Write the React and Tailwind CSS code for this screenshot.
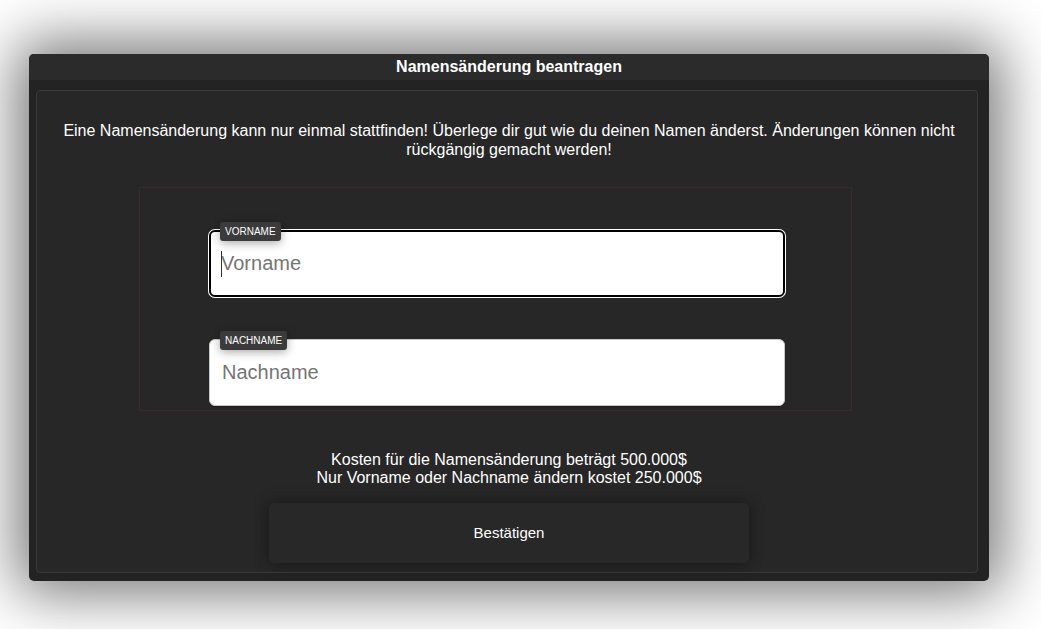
import { useState } from 'react';

const FloatingInput = ({ label, placeholder, focused }) => {
  const [value, setValue] = useState('');
  return (
    <div className="relative w-[576px]">
      <input
        value={value}
        onChange={(e) => setValue(e.target.value)}
        placeholder={placeholder}
        className={`block w-full h-[67px] bg-white rounded-[6px] outline-none text-[20px] text-black placeholder:text-[#757575] ${
          focused
            ? 'border-2 border-black pl-[10px] shadow-[0_0_0_1px_#ffffff]'
            : 'border border-[#c8c8c8] pl-[12px] shadow-[0_1px_1px_rgba(0,0,0,0.35)]'
        }`}
      />
      {/* fake caret for the focused field */}
      {focused && value === '' && (
        <span className="absolute left-[12px] top-[21px] w-px h-[26px] bg-[#333]" />
      )}
      <span className="absolute left-[11px] top-[-8px] h-[19px] px-[5px] flex items-center rounded-[3px] bg-[#3b3b3b] text-white text-[10px] uppercase leading-none shadow-[0_2px_10px_rgba(0,0,0,0.35)]">
        {label}
      </span>
    </div>
  );
};

const App = () => {
  return (
    <div className="min-h-screen bg-white pt-[54px] pl-[29px] overflow-hidden font-['Liberation_Sans',Arial,sans-serif]">
      <div className="w-[960px] h-[527px] rounded-[5px] bg-[#232323] flex flex-col shadow-[0_0_60px_12px_rgba(0,0,0,0.55)]">

        {/* HEADER */}
        <div className="h-[26px] shrink-0 rounded-t-[5px] bg-[#2b2b2b] flex items-center justify-center">
          <h1 className="text-white text-[16px] font-bold">Namensänderung beantragen</h1>
        </div>

        {/* BODY */}
        <div className="flex-1 pt-[10px] pb-[8px] pl-[7px] pr-[11px] flex">
          <div className="flex-1 rounded-[4px] border border-[#3a3a3a] bg-[#272727] flex flex-col items-center pt-[30px] pl-[24px] pr-[20px]">
            <p className="text-white text-[16px] leading-[19px] text-center">
              Eine Namensänderung kann nur einmal stattfinden! Überlege dir gut wie du deinen Namen änderst. Änderungen können nicht rückgängig gemacht werden!
            </p>

            {/* FORM */}
            <div className="self-start ml-[78px] mt-[28px] w-[713px] h-[224px] border border-[#3a2a2a] pl-[69px] pt-[42px] flex flex-col gap-[42px]">
              <FloatingInput label="Vorname" placeholder="Vorname" focused />
              <FloatingInput label="Nachname" placeholder="Nachname" />
            </div>

            <div className="mt-[40px] text-white text-[16px] leading-[18px] text-center">
              <p>Kosten für die Namensänderung beträgt 500.000$</p>
              <p>Nur Vorname oder Nachname ändern kostet 250.000$</p>
            </div>

            <button className="mt-[16px] w-[480px] h-[60px] rounded-[5px] bg-[#282828] text-white text-[15px] shadow-[0_0_16px_rgba(0,0,0,0.45)]">
              Bestätigen
            </button>
          </div>
        </div>
      </div>
    </div>
  );
};

export default App;
